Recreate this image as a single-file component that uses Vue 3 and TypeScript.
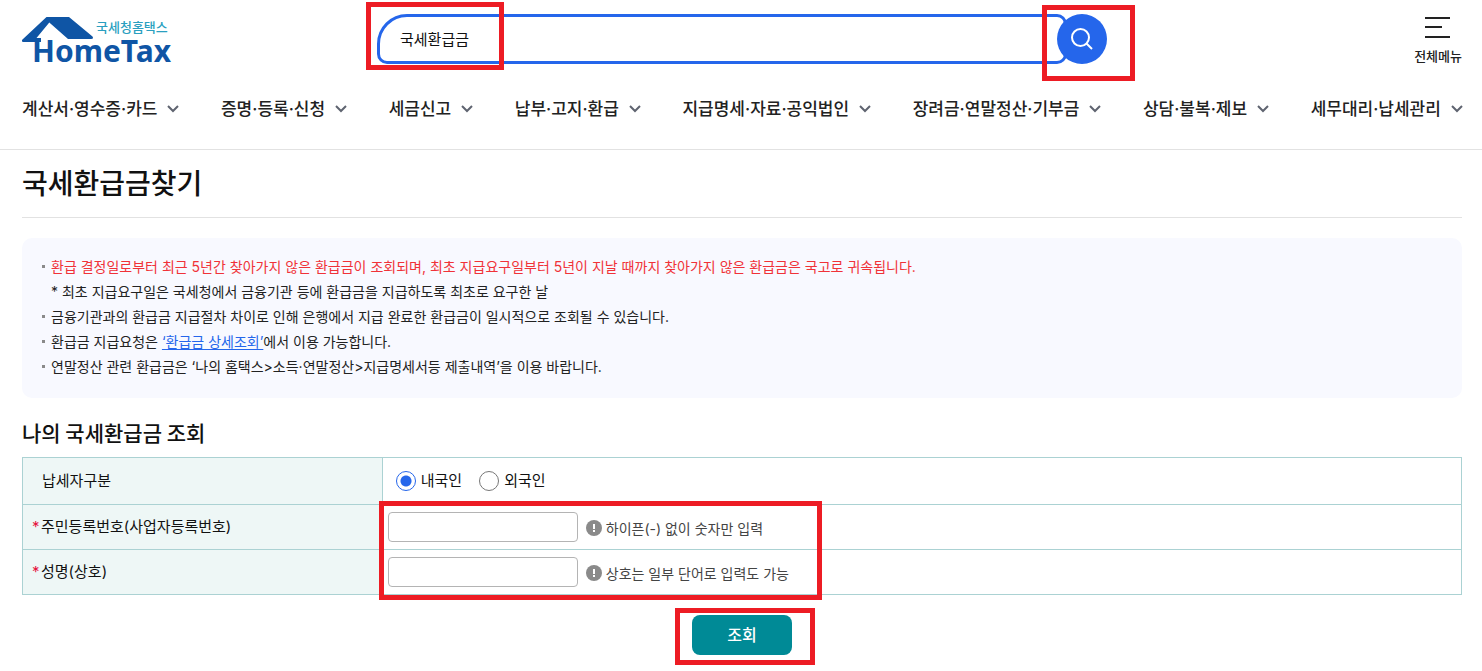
<script setup lang="ts">
import { ref } from 'vue'

const menus: string[] = [
  '계산서·영수증·카드',
  '증명·등록·신청',
  '세금신고',
  '납부·고지·환급',
  '지급명세·자료·공익법인',
  '장려금·연말정산·기부금',
  '상담·불복·제보',
  '세무대리·납세관리',
]

const keyword = ref('국세환급금')
const taxpayer = ref<'local' | 'foreign'>('local')
const regNo = ref('')
const name = ref('')
</script>

<template>
  <div class="page">
    <header class="header">
      <div class="top">
        <a class="logo" href="#" aria-label="국세청홈택스 HomeTax">
          <svg width="152" height="56" viewBox="0 0 152 56">
            <path
              d="M24.5 1H47L70.5 20.5Q72 23 69 23H46L27.3 6.5L14.5 22H19V26H1Q-1 25 0.5 23.5Z"
              fill="#0f55a5"
            />
            <text class="logo-ko" x="74" y="16">국세청홈택스</text>
            <text class="logo-en" x="10" y="46">HomeTax</text>
          </svg>
        </a>
        <form class="search" role="search" @submit.prevent>
          <div class="search-field">
            <input v-model="keyword" class="search-input" type="text" aria-label="검색어" />
          </div>
          <button class="search-button" type="submit" aria-label="검색">
            <svg width="24" height="24" viewBox="0 0 24 24" fill="none" stroke="#fff" stroke-width="2">
              <circle cx="10.5" cy="10.5" r="8.5" />
              <path d="M16.5 16.5L22 22" />
            </svg>
          </button>
          <span class="mark mark-keyword"></span>
          <span class="mark mark-search"></span>
        </form>
        <button class="all-menu" type="button">
          <svg width="26" height="24" viewBox="0 0 26 24" fill="#222">
            <path d="M0 1H25V3H0ZM0 10H17V12H0ZM0 20H25V22H0Z" />
          </svg>
          <span>전체메뉴</span>
        </button>
      </div>
      <nav class="nav">
        <button v-for="menu in menus" :key="menu" class="nav-item" type="button">
          {{ menu }}
          <svg width="12" height="8" viewBox="0 0 12 8" fill="none" stroke="#5f6470" stroke-width="2">
            <path d="M1 1L6 6L11 1" />
          </svg>
        </button>
      </nav>
    </header>

    <main class="main">
      <h1 class="title">국세환급금찾기</h1>

      <ul class="notice">
        <li class="red">
          환급 결정일로부터 최근 5년간 찾아가지 않은 환급금이 조회되며, 최초 지급요구일부터 5년이 지날 때까지 찾아가지 않은 환급금은 국고로 귀속됩니다.
        </li>
        <li class="sub">* 최초 지급요구일은 국세청에서 금융기관 등에 환급금을 지급하도록 최초로 요구한 날</li>
        <li>금융기관과의 환급금 지급절차 차이로 인해 은행에서 지급 완료한 환급금이 일시적으로 조회될 수 있습니다.</li>
        <li>환급금 지급요청은 <a href="#">‘환급금 상세조회’</a>에서 이용 가능합니다.</li>
        <li>연말정산 관련 환급금은 ‘나의 홈택스&gt;소득·연말정산&gt;지급명세서등 제출내역’을 이용 바랍니다.</li>
      </ul>

      <h2 class="subtitle">나의 국세환급금 조회</h2>

      <form @submit.prevent>
        <div class="table-wrap">
          <table class="table">
            <tbody>
              <tr class="row-first">
                <th id="kind" scope="row">납세자구분</th>
                <td>
                  <div class="radios" role="radiogroup" aria-labelledby="kind">
                    <label>
                      <input v-model="taxpayer" type="radio" name="taxpayer" value="local" />
                      <span>내국인</span>
                    </label>
                    <label>
                      <input v-model="taxpayer" type="radio" name="taxpayer" value="foreign" />
                      <span>외국인</span>
                    </label>
                  </div>
                </td>
              </tr>
              <tr>
                <th scope="row" class="required">
                  <label for="reg-no"><span class="star">*</span>주민등록번호(사업자등록번호)</label>
                </th>
                <td>
                  <div class="field">
                    <input id="reg-no" v-model="regNo" type="text" />
                    <span class="hint">
                      <svg width="16" height="16" viewBox="0 0 16 16">
                        <circle cx="8" cy="8" r="8" fill="#8a8a8a" />
                        <path d="M7 4H9V9H7ZM7 10H9V12H7Z" fill="#fff" />
                      </svg>
                      하이픈(-) 없이 숫자만 입력
                    </span>
                  </div>
                </td>
              </tr>
              <tr>
                <th scope="row" class="required">
                  <label for="name"><span class="star">*</span>성명(상호)</label>
                </th>
                <td>
                  <div class="field">
                    <input id="name" v-model="name" type="text" />
                    <span class="hint">
                      <svg width="16" height="16" viewBox="0 0 16 16">
                        <circle cx="8" cy="8" r="8" fill="#8a8a8a" />
                        <path d="M7 4H9V9H7ZM7 10H9V12H7Z" fill="#fff" />
                      </svg>
                      상호는 일부 단어로 입력도 가능
                    </span>
                  </div>
                </td>
              </tr>
            </tbody>
          </table>
          <span class="mark mark-fields"></span>
        </div>
        <div class="actions">
          <div class="submit-wrap">
            <button class="submit" type="submit">조회</button>
            <span class="mark mark-submit"></span>
          </div>
        </div>
      </form>
    </main>
  </div>
</template>

<style>
body {
  margin: 0;
  background: #fff;
}
</style>

<style scoped>
.page,
.page button,
.page input {
  font-family: Inter, 'Noto Sans CJK KR', sans-serif;
}
.page {
  color: #222;
  font-size: 15px;
}
.page * {
  box-sizing: border-box;
}
button {
  border: 0;
  padding: 0;
  background: none;
  color: inherit;
  cursor: pointer;
}
.header {
  border-bottom: 1px solid #e2e2e2;
}
.top {
  display: grid;
  grid-template-columns: 1fr 730px 1fr;
  height: 78px;
  padding: 14px 20px 0 22px;
}
.logo {
  display: block;
  width: 152px;
  height: 58px;
  padding-top: 2px;
}
.logo-ko {
  font: 500 13px 'Noto Sans CJK KR', sans-serif;
  fill: #2a9fc0;
}
.logo-en {
  font: 700 30px 'Noto Sans', sans-serif;
  fill: #0f55a5;
}
.search {
  position: relative;
  display: flex;
  height: 50px;
}
.search-field {
  flex: 1;
  margin-right: -10px;
  border: 3px solid #2566eb;
  border-radius: 30px 10px 10px 10px;
}
.search-input {
  width: 100%;
  height: 100%;
  padding: 0 20px 2px;
  border: 0;
  outline: 0;
  background: none;
  color: #111;
  font-size: 15px;
}
.search-button {
  position: relative;
  display: flex;
  align-items: center;
  justify-content: center;
  width: 50px;
  height: 50px;
  border-radius: 50%;
  background: #2566eb;
}
.all-menu {
  justify-self: end;
  display: flex;
  flex-direction: column;
  align-items: center;
  gap: 6px;
  height: 53px;
  padding-top: 2px;
  font-size: 13px;
  font-weight: 500;
  line-height: 20px;
}
.nav {
  display: flex;
  justify-content: space-between;
  height: 71px;
  padding: 15px 19px 0 22px;
}
.nav-item {
  display: flex;
  align-items: center;
  gap: 10px;
  height: 28px;
  font-size: 17px;
  font-weight: 500;
  white-space: nowrap;
}
.nav-item svg {
  margin-top: 4px;
}
.main {
  padding: 0 20px 10px 22px;
}
.title {
  margin: 0;
  padding: 2px 0 0;
  border-bottom: 1px solid #e2e2e2;
  color: #111;
  font-size: 28px;
  font-weight: 500;
  line-height: 65px;
}
.notice {
  margin: 20px 0 0;
  padding: 16px 20px 19px 19px;
  border-radius: 10px;
  background: #f8f9ff;
  list-style: none;
  font-size: 14px;
  line-height: 25px;
}
.notice li {
  padding-left: 10px;
  background: linear-gradient(#8a8a8a, #8a8a8a) 1px 11px / 3px 3px no-repeat;
}
.notice .sub {
  background: none;
}
.notice .red {
  color: #f03238;
}
.notice a {
  color: #2566eb;
  text-underline-offset: 2px;
}
.subtitle {
  margin: 18px 0 9px;
  color: #111;
  font-family: 'Noto Sans CJK KR', sans-serif;
  font-size: 21px;
  font-weight: 500;
  line-height: 32px;
}
.table-wrap {
  position: relative;
}
.table {
  width: 100%;
  border: 1px solid #abd2d3;
  border-collapse: collapse;
  table-layout: fixed;
}
.table tr {
  height: 45px;
}
.table .row-first {
  height: 47px;
}
.table th,
.table td {
  padding: 0 5px;
  border: 1px solid #abd2d3;
  text-align: left;
}
.table th {
  width: 25%;
  padding: 0 0 3px 19px;
  background: #eef7f6;
  color: #111;
  font-weight: 400;
}
.table .required {
  padding-left: 9px;
}
.star {
  display: inline-block;
  width: 9px;
  color: #e6123d;
}
.radios {
  display: flex;
  gap: 17px;
  padding-left: 8px;
}
.radios label {
  display: flex;
  align-items: center;
  gap: 5px;
  color: #111;
}
.radios span {
  padding-bottom: 3px;
}
.radios input {
  appearance: none;
  width: 20px;
  height: 20px;
  margin: 0;
  border: 1px solid #777;
  border-radius: 50%;
  background: #fff;
}
.radios input:checked {
  border-color: #2566eb;
  background: radial-gradient(circle, #2566eb 5px, #fff 6px);
}
.field {
  display: flex;
  align-items: center;
}
.field input {
  width: 190px;
  height: 30px;
  padding: 0 8px;
  border: 1px solid #b4b4b4;
  border-radius: 4px;
  font-size: 15px;
}
.hint {
  display: flex;
  align-items: center;
  gap: 4px;
  padding: 2px 0 0 8px;
  color: #444;
  font-size: 14px;
}
.actions {
  display: flex;
  justify-content: center;
  padding-top: 20px;
}
.submit-wrap {
  position: relative;
}
.submit {
  display: block;
  width: 100px;
  height: 40px;
  padding-bottom: 2px;
  border-radius: 8px;
  background: #008a96;
  color: #fff;
  font-size: 16px;
  font-weight: 500;
}
.mark {
  position: absolute;
  border: 5px solid #ed1c24;
  pointer-events: none;
}
.mark-keyword {
  top: -12px;
  left: -11px;
  width: 138px;
  height: 68px;
}
.mark-search {
  top: -9px;
  right: -28px;
  width: 93px;
  height: 76px;
}
.mark-fields {
  top: 44px;
  left: calc(25% - 3px);
  width: 443px;
  height: 99px;
}
.mark-submit {
  top: -7px;
  left: -17px;
  width: 140px;
  height: 57px;
}
</style>
